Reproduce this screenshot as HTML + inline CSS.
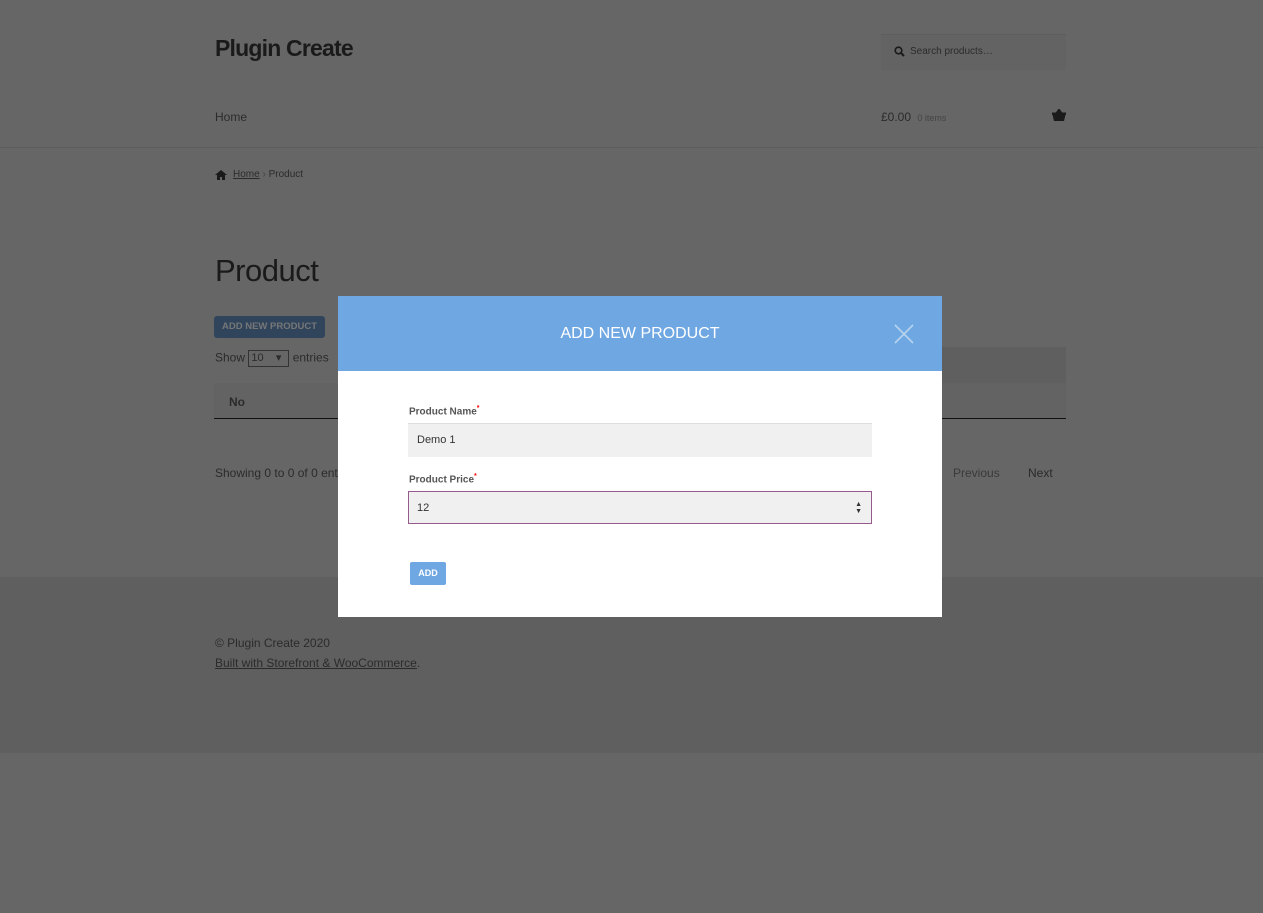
<!DOCTYPE html>
<html><head><meta charset="utf-8"><style>
*{box-sizing:border-box;margin:0;padding:0}
body{width:1263px;height:913px;background:#666;font-family:"Liberation Sans",sans-serif;position:relative;overflow:hidden;color:#1a1a1a}
.a{position:absolute}
.t{font-size:12px;color:#2b2b2b}
</style></head><body>
<div class="a" style="left:215px;top:35px;font-size:23px;font-weight:bold;color:#1a1a1a;letter-spacing:-0.8px">Plugin Create</div>
<div class="a" style="left:881px;top:34px;width:185px;height:36px;background:#636363;border-top:1px solid #5e5e5e"></div>
<svg class="a" style="left:894px;top:46px" width="11" height="11" viewBox="0 0 11 11"><circle cx="4.5" cy="4.5" r="3.3" fill="none" stroke="#1a1a1a" stroke-width="1.6"/><path d="M7 7l3 3" stroke="#1a1a1a" stroke-width="2"/></svg>
<div class="a t" style="left:910px;top:46px;font-size:10px">Search products…</div>
<div class="a t" style="left:215px;top:110px">Home</div>
<div class="a t" style="left:881px;top:110px">£0.00 <span style="font-size:9px;color:#444;margin-left:3px">0 items</span></div>
<svg class="a" style="left:1052px;top:109px" width="14" height="12" viewBox="0 0 14 12"><path d="M0 4h14v1.5h-1L11.5 12h-9L1 5.5H0z M4 4L7 0 10 4" fill="#1a1a1a" stroke="#1a1a1a" stroke-width="1"/></svg>
<div class="a" style="left:0;top:147px;width:1263px;height:1px;background:#5e5e5e"></div>
<svg class="a" style="left:215px;top:170px" width="12" height="10" viewBox="0 0 12 10"><path d="M0 5L6 0l6 5h-2v5H7V7H5v3H2V5z" fill="#1a1a1a"/></svg>
<div class="a t" style="left:233px;top:169px;font-size:10px"><u>Home</u> <span style="color:#444">›</span> Product</div>
<div class="a" style="left:215px;top:253px;font-size:31px;font-weight:300;color:#1a1a1a;letter-spacing:-0.5px">Product</div>
<div class="a" style="left:214px;top:316px;width:111px;height:22px;background:#30445c;border-radius:3px;color:#777;font-size:9.5px;font-weight:bold;text-align:center;line-height:22px">ADD NEW PRODUCT</div>
<div class="a" style="left:338px;top:347px;width:728px;height:36px;background:#5f5f5f"></div>
<div class="a" style="left:214px;top:383px;width:852px;height:36px;background:#636363;border-bottom:1px solid #111"></div>
<div class="a t" style="left:215px;top:350px">Show <span style="display:inline-block;width:41px;height:17px;border:1px solid #333;vertical-align:middle;font-size:11px;line-height:15px;padding-left:2px">10 &nbsp;&nbsp;&nbsp;▾</span> entries</div>
<div class="a" style="left:229px;top:395px;font-size:12px;font-weight:bold;color:#2b2b2b">No</div>
<div class="a t" style="left:215px;top:466px">Showing 0 to 0 of 0 entries</div>
<div class="a t" style="left:953px;top:466px;color:#3a3a3a">Previous</div>
<div class="a t" style="left:1028px;top:466px">Next</div>
<div class="a" style="left:0;top:577px;width:1263px;height:176px;background:#5f5f5f"></div>
<div class="a t" style="left:215px;top:636px">© Plugin Create 2020</div>
<div class="a t" style="left:215px;top:656px"><u>Built with Storefront &amp; WooCommerce</u>.</div>
<div class="a" style="left:338px;top:296px;width:604px;height:321px;background:#fff">
<div style="height:75px;background:#6fa7e2;color:#fff;font-size:16px;text-align:center;line-height:76px">ADD NEW PRODUCT</div>
<svg class="a" style="left:556px;top:28px" width="20" height="20" viewBox="0 0 20 20"><path d="M1 1l18 18M19 1L1 19" stroke="#b8d3f0" stroke-width="1.6"/></svg>
<div class="a" style="left:71px;top:109px;font-size:10px;font-weight:bold;color:#555">Product Name<sup style="color:red;font-size:7px">*</sup></div>
<div class="a" style="left:70px;top:127px;width:464px;height:34px;background:#f0f0f0;border-top:1px solid #ddd;font-size:11px;padding:10px 9px;color:#333">Demo 1</div>
<div class="a" style="left:71px;top:177px;font-size:10px;font-weight:bold;color:#555">Product Price<sup style="color:red;font-size:7px">*</sup></div>
<div class="a" style="left:70px;top:195px;width:464px;height:33px;background:#f0f0f0;border:1px solid #955b8a;font-size:11px;padding:10px 8px;color:#333">12<span style="position:absolute;right:9px;top:9px;font-size:7px;line-height:7px;color:#333">▲<br>▼</span></div>
<div class="a" style="left:72px;top:266px;width:36px;height:23px;background:#6fa7e2;border-radius:2px;color:#fff;font-size:9px;font-weight:bold;text-align:center;line-height:23px">ADD</div>
</div>
</body></html>
